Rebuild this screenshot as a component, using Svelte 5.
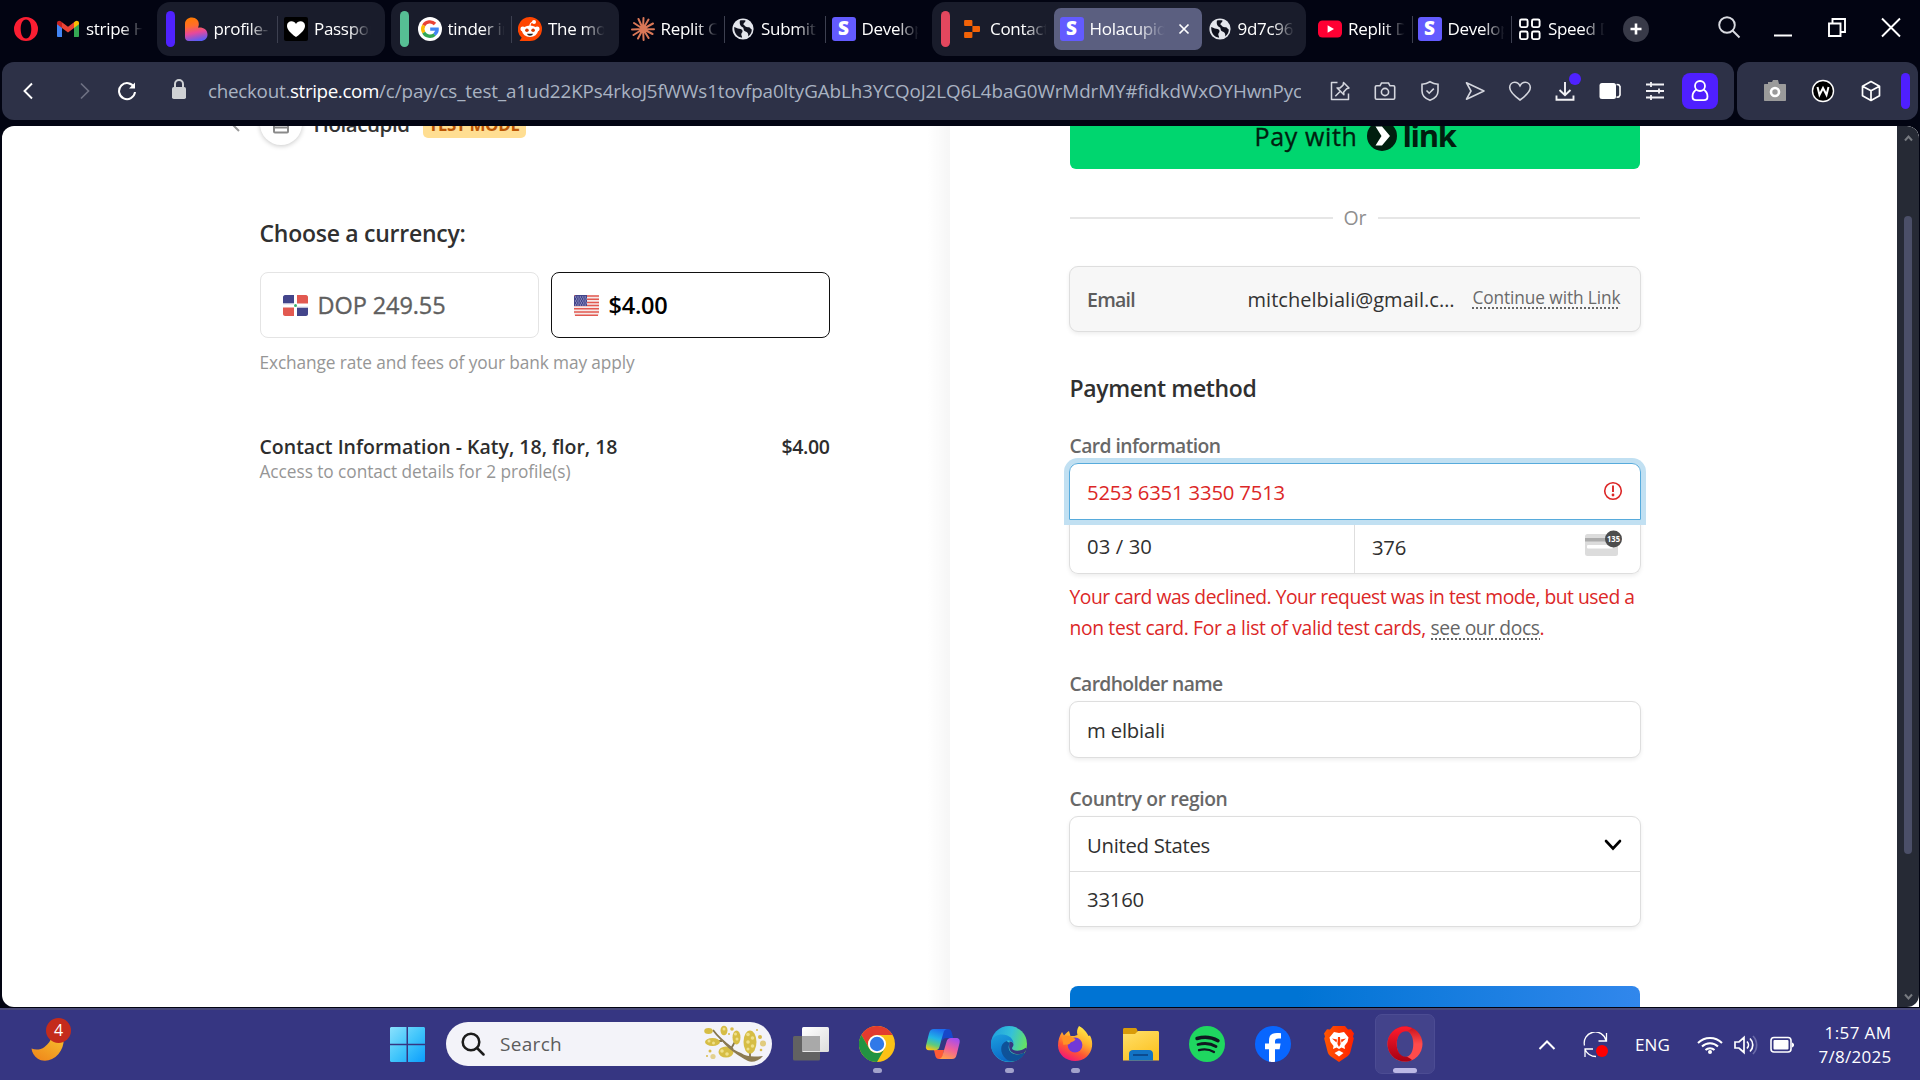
<script>
  const g1 = [
    { icon: 'tinder', text: 'profile-', sep: true },
    { icon: 'heartTile', text: 'Passpor' }
  ];
  const g2 = [
    { icon: 'google', text: 'tinder in', sep: true },
    { icon: 'reddit', text: 'The mos' }
  ];
  const loose = [
    { icon: 'claude', text: 'Replit C', sep: true },
    { icon: 'globe', text: 'Submit', sep: true },
    { icon: 'stripe', text: 'Develop' }
  ];
  const g3 = [
    { icon: 'replit', text: 'Contact' },
    { icon: 'stripe', text: 'Holacupid', active: true },
    { icon: 'globe', text: '9d7c96' }
  ];
  const tail = [
    { icon: 'youtube', text: 'Replit D', sep: true },
    { icon: 'stripe', text: 'Develop', sep: true },
    { icon: 'speed', text: 'Speed D' }
  ];
  const tools = ['pin', 'camera', 'shield', 'send', 'heart', 'download', 'cup', 'sliders'];
  const apps = [
    { icon: 'taskview' },
    { icon: 'chrome', run: true },
    { icon: 'copilot' },
    { icon: 'edge', run: true },
    { icon: 'firefox', run: true },
    { icon: 'folder' },
    { icon: 'spotify' },
    { icon: 'facebook' },
    { icon: 'brave' },
    { icon: 'opera', focus: true }
  ];

  // Tracks a line of text so that it spans the given width.
  function fit(node, width) {
    const natural = node.getBoundingClientRect().width;
    const count = node.textContent.length;
    node.style.letterSpacing = ((width - natural) / count).toFixed(3) + 'px';
  }
</script>

{#snippet icon(name)}
  {#if name === 'operaMark'}
    <svg width="26" height="26" viewBox="0 0 26 26"><path fill="#fa1e32" fill-rule="evenodd" d="M13 1a12 12 0 1 1 0 24a12 12 0 1 1 0-24zM13 3.6c-3.600 0-5.300 4.400-5.300 9.400s1.700 9.400 5.300 9.400s5.300-4.400 5.300-9.400s-1.700-9.400-5.300-9.400z" /></svg>
  {:else if name === 'gmail'}
    <svg width="24" height="24" viewBox="0 0 24 24"><path fill="#4285f4" d="M1 6v13.200c0 .5.400.8.800.8H6V10z" /><path fill="#34a853" d="M18 20h4.200c.5 0 .8-.4.800-.8V6l-5 4z" /><path fill="#fbbc04" d="M18 5.300V11l5-3.800V6c0-2-2.300-2.900-3.800-1.700z" /><path fill="#ea4335" d="M6 11V5.300l6 4.500 6-4.500V11l-6 4.600z" /><path fill="#c5221f" d="M1 6v1.200L6 11V5.300L4.800 4.300C3.300 3.100 1 4 1 6z" /></svg>
  {:else if name === 'tinder'}
    <svg width="24" height="24" viewBox="0 0 24 24"><defs><linearGradient id="td" x1=".3" y1="0" x2=".5" y2="1"><stop offset="0" stop-color="#ff7a00" /><stop offset=".35" stop-color="#ff6d2d" /><stop offset=".65" stop-color="#e8489a" /><stop offset="1" stop-color="#5b5cf5" /></linearGradient></defs><path fill="url(#td)" d="M1 7C1 3 4 .5 8 .5s7 3 6.800 6.500c0 1.500-.3 2.500-.8 3.700 5-.7 9.500 2 9.500 6.800 0 4-3 6.500-7 6.500H5c-3 0-4-2-4-4z" /></svg>
  {:else if name === 'heartTile'}
    <svg width="24" height="24" viewBox="0 0 24 24"><rect width="24" height="24" rx="2" /><path fill="#fff" d="M12 20C5.500 15.500 3 12 3 8.700 3 5.800 5 4.200 7.500 4.200c2 0 3.600 1 4.500 2.800.9-1.800 2.500-2.800 4.500-2.800C19 4.200 21 5.800 21 8.700c0 3.300-2.500 6.800-9 11.300z" /></svg>
  {:else if name === 'google'}
    <svg width="24" height="24" viewBox="0 0 24 24"><circle cx="12" cy="12" r="12" fill="#fff" /><g fill="none" stroke-width="3.400"><path stroke="#ea4335" d="M17 7A7.200 7.200 0 0 0 5.700 8.400" /><path stroke="#fbbc05" d="M5.800 8.300a7.200 7.200 0 0 0 0 7.400" /><path stroke="#34a853" d="M5.700 15.600a7.200 7.200 0 0 0 11 1.800" /><path stroke="#4285f4" d="M16.500 17.500c1.800-1.500 2.700-3.500 2.600-5.400H12.200" /></g></svg>
  {:else if name === 'reddit'}
    <svg width="24" height="24" viewBox="0 0 24 24"><path fill="#ff4500" d="M12 0a12 12 0 1 1 0 24H1.500l2.200-3.300A12 12 0 0 1 12 0z" /><circle cx="4.800" cy="12" r="2.400" fill="#fff" /><circle cx="19.200" cy="12" r="2.400" fill="#fff" /><circle cx="16" cy="5" r="2" fill="#fff" /><path d="M12 9c0-3 1.500-4 4-4" fill="none" stroke="#fff" stroke-width="1.200" /><ellipse cx="12" cy="14.200" rx="7.800" ry="5.800" fill="#fff" /><circle cx="8.900" cy="13.300" r="1.800" fill="#d93a00" /><circle cx="15.100" cy="13.300" r="1.800" fill="#d93a00" /><path d="M9 16.800h6c-.4 2.600-5.600 2.600-6 0z" fill="#222" /></svg>
  {:else if name === 'claude'}
    <svg width="24" height="24" viewBox="0 0 24 24"><path d="M12 12L12.500 1M12 12L17.500 2.500M12 12L22 6.500M12 12l11 .3M12 12l9.500 5M12 12l5.600 9M12 12l.6 11M12 12L7 21.500M12 12l-9.500 6M12 12L1 12.500M12 12L3 6M12 12L7.500 2" stroke="#d97757" stroke-width="2" stroke-linecap="round" /></svg>
  {:else if name === 'globe'}
    <svg width="24" height="24" viewBox="0 0 24 24"><circle cx="12" cy="12" r="10.600" fill="#e4e6ec" /><path fill="#10121e" d="M3.200 10c2 .5 3 1.600 5 1.800 2 .1 3.300.8 3.300 2.400 0 1.500-1.300 1.700-1.200 3.300 0 1.200.9 2 .8 3.200C6.300 20.200 3 16.500 3.200 10zM9 3.600c1.500-.5 4-.6 5.500-.1.200 1.500-1.500 2-2 3.300-.4 1 .8 1.300 1.500 2.200 1 1.300 2.600 1 4 1.300 1.700.4 1.500 2 2.800 2.300 0 3-1.400 5.400-3.600 6.800.3-2-.2-3.500-1.600-4.400-1.500-1-2.900-1-3-3 0-1.700-1.700-1.900-2.700-2.900C8.600 7.700 8.500 5 9 3.600z" /></svg>
  {:else if name === 'stripe'}
    <span class="stripe-logo">S</span>
  {:else if name === 'replit'}
    <svg width="24" height="24" viewBox="0 0 24 24"><g fill="#f26207"><path d="M5 3h6.500c.5 0 .9.400.9.900V9H5c-.5 0-.9-.4-.9-.9V3.900c0-.5.400-.9.900-.9zM12.400 9h6.700c.5 0 .9.400.9.900v4.200c0 .5-.4.900-.9.900h-6.700zM5 15h7.400v5.100c0 .5-.4.900-.9.900H5c-.5 0-.9-.4-.9-.9v-4.200c0-.5.400-.9.900-.9z" /></g></svg>
  {:else if name === 'youtube'}
    <svg width="24" height="24" viewBox="0 0 24 24"><rect y="3.500" width="24" height="17" rx="4.500" fill="#ff0033" /><path fill="#fff" d="M9.600 8.300l6.400 3.700-6.400 3.700z" /></svg>
  {:else if name === 'speed'}
    <svg width="24" height="24" viewBox="0 0 24 24" fill="none" stroke="#fff" stroke-width="1.900"><rect x="2" y="2.500" width="7.600" height="7.600" rx="1.500" /><rect x="14" y="2.500" width="7.600" height="7.600" rx="1.500" /><rect x="2" y="14.500" width="7.600" height="7.600" rx="1.500" /><rect x="14" y="14.500" width="7.600" height="7.600" rx="1.500" /></svg>
  {:else if name === 'pin'}
    <svg width="24" height="24" viewBox="0 0 24 24" fill="none" stroke="#d4d6de" stroke-width="1.500" stroke-linejoin="round"><path d="M9.500 3.500h-6v17h17V14.500" /><path d="M15.500 3.500l5.500 5.500-2.300.7-3 3.300.2 2.700-6.800-6.800 2.800.2 3.200-3zM12.300 12.300l-5 5" /></svg>
  {:else if name === 'camera'}
    <svg width="24" height="24" viewBox="0 0 24 24" fill="none" stroke="#d4d6de" stroke-width="1.600"><path d="M3.500 6.800H7L8.500 4h7L17 6.800h3.500c.7 0 1.200.5 1.200 1.200v11c0 .7-.5 1.200-1.200 1.200h-17c-.7 0-1.200-.5-1.200-1.200V8c0-.7.500-1.200 1.200-1.200z" /><circle cx="12" cy="13" r="3.600" /></svg>
  {:else if name === 'shield'}
    <svg width="24" height="24" viewBox="0 0 24 24" fill="none" stroke="#d4d6de" stroke-width="1.600"><path d="M12 2.700c2.500 1.500 5 2.300 8 2.600V12c0 4.500-3 7.500-8 9.300C7 19.500 4 16.500 4 12V5.300c3-.3 5.500-1.100 8-2.600z" /><path d="M8.500 11.500l2.700 2.700 4.600-4.600" /></svg>
  {:else if name === 'send'}
    <svg width="24" height="24" viewBox="0 0 24 24" fill="none" stroke="#d4d6de" stroke-width="1.600" stroke-linejoin="round"><path d="M3.500 3.800L21 12 3.500 20.200 8 12z" /></svg>
  {:else if name === 'heart'}
    <svg width="24" height="24" viewBox="0 0 24 24" fill="none" stroke="#d4d6de" stroke-width="1.600"><path d="M12 21C5 16 1.700 12.500 1.700 8.600c0-3.200 2.300-5.300 5-5.300 2.300 0 4.200 1.300 5.300 3.500 1.100-2.200 3-3.500 5.300-3.500 2.700 0 5 2.100 5 5.300C22.300 12.500 19 16 12 21z" /></svg>
  {:else if name === 'download'}
    <svg width="24" height="24" viewBox="0 0 24 24" fill="none" stroke="#f2f2f5" stroke-width="1.900"><path d="M12 3v13M6.500 11l5.500 5.300L17.500 11M3.500 16.500v4.300h17v-4.300" /></svg>
    <i class="dl-dot"></i>
  {:else if name === 'cup'}
    <svg width="24" height="24" viewBox="0 0 24 24"><rect x="1.500" y="4" width="16.500" height="16" rx="2.500" fill="#fff" /><path d="M18.500 5.500l2.300.3 1.200 1.800v8.500l-1.200 1.800-2.300.3" fill="none" stroke="#fff" stroke-width="1.600" /></svg>
  {:else if name === 'sliders'}
    <svg width="24" height="24" viewBox="0 0 24 24" stroke="#f2f2f5" stroke-width="1.800"><path d="M3 5.500h18M3 12h18M3 18.500h18M8 3v5M16 9.500v5M8 16v5" /></svg>
  {:else if name === 'taskview'}
    <svg width="36" height="36" viewBox="0 0 36 36"><defs><linearGradient id="tv" x2="1" y2="1"><stop stop-color="#fff" /><stop offset="1" stop-color="#dcdcdc" /></linearGradient></defs><rect y="10" width="27" height="24.500" rx="1.500" fill="#626262" /><rect x="9" y="1" width="27" height="25" rx="1.500" fill="url(#tv)" /><path fill="#a9a9a9" d="M9 10h18v15H9z" /></svg>
  {:else if name === 'chrome'}
    <svg width="36" height="36" viewBox="0 0 36 36"><circle cx="18" cy="18" r="18" fill="#fbc116" /><path fill="#e33b2e" d="M2.400 9A18 18 0 0 1 33.600 9H18a9 9 0 0 0-7.800 13.500z" /><path fill="#229342" d="M2.400 9a18 18 0 0 0 15.600 27l7.800-13.500a9 9 0 0 1-15.600 0z" /><circle cx="18" cy="18" r="9" fill="#fff" /><circle cx="18" cy="18" r="7.200" fill="#3079e8" /></svg>
  {:else if name === 'copilot'}
    <svg width="36" height="36" viewBox="0 0 36 36"><defs><linearGradient id="ca" x1=".6" x2=".3" y2="1"><stop stop-color="#1d6bf0" /><stop offset=".45" stop-color="#22b5e6" /><stop offset=".75" stop-color="#5ecb7c" /><stop offset="1" stop-color="#f5c518" /></linearGradient><linearGradient id="cb" x1=".7" x2=".3" y2="1"><stop stop-color="#a54df0" /><stop offset=".5" stop-color="#f0609a" /><stop offset="1" stop-color="#ff9f4a" /></linearGradient></defs><path fill="#1747c9" d="M17 3h6c2 0 3 1 3.600 3l1.600 6h-7c-2 0-3.200 1-4 3z" /><path fill="#ff5a36" d="M9 24h10l-2 9h-3c-2 0-3-1-3.600-3z" /><path fill="url(#ca)" d="M9 3h13c-2 .3-3 2-3.600 4l-4 14c-.6 2.200-2 3.300-4.400 3.300H4c-2.600 0-3.600-2-3-4.800l3-12C4.800 4.400 6.300 3 9 3z" /><path fill="url(#cb)" d="M27 33H14c2-.3 3-2 3.600-4l4-13.500c.6-2.200 2-3.500 4.400-3.500h5c3 0 4.300 2 3.600 4.800l-3 12C31 31.600 29.700 33 27 33z" /></svg>
  {:else if name === 'edge'}
    <svg width="36" height="36" viewBox="0 0 36 36"><defs><linearGradient id="ea" x2="1" y1=".3" y2=".6"><stop stop-color="#20a0e0" /><stop offset=".5" stop-color="#35c1d8" /><stop offset="1" stop-color="#6be556" /></linearGradient><linearGradient id="eb" x2=".4" y2="1"><stop stop-color="#1ca0de" /><stop offset="1" stop-color="#0a68c8" /></linearGradient></defs><circle cx="18" cy="18" r="18" fill="url(#ea)" /><path fill="url(#eb)" d="M0 16C1 11 6 8.500 11 8.500c7 0 11.500 4.500 11.500 9C21 15 18 14 15.500 15 12 17 12 23 15 27c3 4.500 9 6.500 14 5A18 18 0 0 1 0 16z" /><path fill="#0f5299" d="M15.500 15C8 18 9 28 15 33c6 4.500 14 2 18.500-5 .8-1-.3-1.500-1.300-1-6 3-13.700 1-14.500-5-.3-2.500 1-4.500 1-5z" /><path fill="#363682" d="M18.500 15.500c2.700.2 4 1.500 4 3.200 0 1.500-1.500 2.300-1.500 3.600 0 3 9 3.700 13.700-.5L36 23l-3 4c-6 2.500-13.500 1-14.700-5-.5-2.500.2-4.600.2-6.500z" /></svg>
  {:else if name === 'firefox'}
    <svg width="36" height="36" viewBox="0 0 36 36"><defs><linearGradient id="fa" x1=".8" x2=".3" y2="1"><stop stop-color="#fff04a" /><stop offset=".4" stop-color="#ffb02e" /><stop offset=".7" stop-color="#ff5634" /><stop offset="1" stop-color="#f0127d" /></linearGradient></defs><path fill="url(#fa)" d="M22 0c6 3.500 8 7 9.500 10l1.500-.5c2 4 2.500 7 2 11C34 29 27 35 18 35S1 28.500 1 19.500C1 14 2.500 10 5 6l2 3.500C9 7 10.500 6 12 5l1.500 5c3 0 5 0 7-1C19.500 6 20 3 22 0z" /><circle cx="18" cy="19" r="7.400" fill="#7139d8" /><path fill="#ff9226" d="M5 12c3-3 6-2 8.500-2 1.500 1.500 3 2 5 3-1 3-5 2.500-6 5-2 1-4 0-6 1z" /></svg>
  {:else if name === 'folder'}
    <svg width="36" height="36" viewBox="0 0 36 36"><defs><linearGradient id="fo" x2=".6" y2="1"><stop stop-color="#ffe06a" /><stop offset="1" stop-color="#fcc324" /></linearGradient></defs><path fill="#d99b09" d="M0 3.500C0 2.500.7 2 1.500 2H12c1 0 2 .5 2 1.500L16 9H0z" /><path fill="url(#fo)" d="M0 8h12l3-3h19.500c.9 0 1.500.6 1.500 1.500V34.500H0z" /><path fill="#1273c4" d="M6 34.500V28c0-2.500 1.500-4 4-4h16c2.500 0 4 1.500 4 4v6.500z" /><path stroke="#0b4b8f" stroke-width="2" d="M10 29h15" /></svg>
  {:else if name === 'spotify'}
    <svg width="36" height="36" viewBox="0 0 36 36"><circle cx="18" cy="18" r="18" fill="#1fd760" /><g fill="none" stroke="#101820" stroke-linecap="round"><path stroke-width="3.400" d="M8 12.500c7-2 15-1.200 21 2.200" /><path stroke-width="2.800" d="M9 18.500c6-1.600 13-1 18 2" /><path stroke-width="2.300" d="M10 24.200c5-1.300 10.500-.8 15 1.800" /></g></svg>
  {:else if name === 'facebook'}
    <svg width="36" height="36" viewBox="0 0 36 36"><circle cx="18" cy="18" r="18" fill="#0866ff" /><path fill="#fff" d="M14 35.500V23.300H10v-5.800h4v-2.600c0-5.500 2.500-8 8-8 1.500 0 3 .1 4 .4v5.200c-.7-.1-1.500-.1-2.500-.1-2.700 0-3.500 1-3.500 3.200v1.900h5.600l-1 5.800H20v12.400c-2 .4-4 .3-6-.2z" /></svg>
  {:else if name === 'brave'}
    <svg width="36" height="36" viewBox="0 0 36 36"><defs><linearGradient id="br" x2="1"><stop stop-color="#ff5601" /><stop offset="1" stop-color="#ff2000" /></linearGradient></defs><path fill="url(#br)" d="M12 0h12l3 3.500 3-.3 3 4.300-1 3 .8 2-3.300 13c-.5 2.500-1.500 3.500-3 4.700L18 36l-8.500-5.800C8 29 7 28 6.500 25.500l-3.300-13 .8-2-1-3 3-4.300 3 .3z" /><path fill="#fff" d="M18 7l5-1 4.500 5.500-1 4.500-3 4 .5 3-3.500-1.500-2.500 1.500-2.500-1.500L12 23l.5-3-3-4-1-4.500L13 6zM18 24.500l4.500 2.500-4.500 3.500-4.500-3.500z" /><path fill="#ff3a00" d="M11 12.500l5 1-.5 3zM25 12.500l-5 1 .5 3zM17 11h2l.6 7L18 21l-1.600-3z" /></svg>
  {:else if name === 'opera'}
    <svg width="36" height="36" viewBox="0 0 36 36"><defs><linearGradient id="oa" y2="1" x2="0"><stop stop-color="#ff1b2d" /><stop offset="1" stop-color="#a70014" /></linearGradient><linearGradient id="ob" y2="1" x2="0"><stop stop-color="#c8101c" /><stop offset=".5" stop-color="#ff4b4b" /><stop offset="1" stop-color="#ff4b4b" /></linearGradient></defs><path fill="url(#ob)" fill-rule="evenodd" d="M18 .5a17.500 17.500 0 1 1 0 35a17.500 17.500 0 1 1 0-35zM18 5c-5.500 0-8.300 6-8.300 13S12.500 31 18 31s8.300-6 8.300-13S23.500 5 18 5z" /><path fill="url(#oa)" d="M18 .5C8 .5.500 8.500.500 18S8 35.500 18 35.500c2.500 0 5-.6 7-1.600-1.500-1.200-3-2.300-5-3.100-6.500.8-10.300-5.500-10.300-12.800S13.500 4.500 20 5.200c2-.8 3.500-1.900 5-3.100C23 1.100 20.500.5 18 .5z" /></svg>
  {/if}
{/snippet}

{#snippet tab(t)}
  <div class="tab" class:active={t.active} class:sep={t.sep}>
    <span class="ico">{@render icon(t.icon)}</span>
    <span class="label">{t.text}</span>
    {#if t.active}
      <svg class="close" width="14" height="14" viewBox="0 0 14 14"><path d="M2.500 2.500l9 9M11.500 2.500l-9 9" stroke="#fff" stroke-width="1.700" /></svg>
    {/if}
  </div>
{/snippet}

<div class="screen">
  <header class="tabs">
    <span class="brand">{@render icon('operaMark')}</span>
    <div class="tab first"><span class="ico">{@render icon('gmail')}</span><span class="label">stripe H</span></div>
    <div class="group"><i class="bar violet"></i>{#each g1 as t}{@render tab(t)}{/each}</div>
    <div class="group second"><i class="bar green"></i>{#each g2 as t}{@render tab(t)}{/each}</div>
    <div class="loose">{#each loose as t}{@render tab(t)}{/each}</div>
    <div class="group third"><i class="bar red"></i>{#each g3 as t}{@render tab(t)}{/each}</div>
    <div class="loose tail">{#each tail as t}{@render tab(t)}{/each}</div>
    <span class="plus"><svg width="26" height="26" viewBox="0 0 26 26"><path d="M13 7.500v11M7.500 13h11" stroke="#fff" stroke-width="2.600" /></svg></span>
    <div class="win">
      <svg width="24" height="24" viewBox="0 0 24 24" fill="none" stroke="#d8dae0" stroke-width="1.900"><circle cx="10" cy="10" r="7.800" /><path d="M15.500 15.500l7 7" /></svg>
      <svg width="20" height="24" viewBox="0 0 20 24"><path d="M1 20.500h18" stroke="#fff" stroke-width="2" /></svg>
      <svg width="20" height="24" viewBox="0 0 20 24" fill="none" stroke="#fff" stroke-width="1.900"><path d="M2 8.500h11.500V21H2zM5.500 8V4H18v13h-4" /></svg>
      <svg width="20" height="24" viewBox="0 0 20 24" fill="none" stroke="#fff" stroke-width="1.900"><path d="M1 3.500l18 18M19 3.500l-18 18" /></svg>
    </div>
  </header>

  <div class="navrow">
    <div class="address">
      <svg class="back" width="12" height="18" viewBox="0 0 12 18" fill="none" stroke="#fff" stroke-width="1.900"><path d="M10 1.500L2.500 9l7.500 7.500" /></svg>
      <svg class="fwd" width="12" height="18" viewBox="0 0 12 18" fill="none" stroke="#6d7082" stroke-width="1.700"><path d="M2 1.500L9.500 9 2 16.500" /></svg>
      <svg class="reload" width="20" height="20" viewBox="0 0 20 20" fill="none" stroke="#fff" stroke-width="2"><path d="M17.200 6.500A8 8 0 1 0 18 11" /><path d="M18 1.500v6h-6z" fill="#fff" stroke="none" /></svg>
      <svg class="lock" width="16" height="22" viewBox="0 0 16 22"><rect x="1" y="9" width="14" height="12" rx="1.800" fill="#cfd1d4" /><path d="M4 10V6a4 4 0 0 1 8 0v4" fill="none" stroke="#cfd1d4" stroke-width="2" /></svg>
      <div class="url"><span use:fit={82}>checkout.</span><span class="host" use:fit={89}>stripe.com</span><span use:fit={923}>/c/pay/cs_test_a1ud22KPs4rkoJ5fWWs1tovfpa0ltyGAbLh3YCQoJ2LQ6L4baG0WrMdrMY#fidkdWxOYHwnPyc</span></div>
      <div class="tools">{#each tools as t}<span class="tool">{@render icon(t)}</span>{/each}</div>
      <span class="profile"><svg width="20" height="26" viewBox="0 0 20 26" fill="none" stroke="#fff" stroke-width="1.800"><circle cx="10" cy="8" r="5" /><path d="M6.500 11.500C4 13 2.500 15.500 2.500 18.500c0 2.500 1.200 3.700 3.500 3.700h8c2.300 0 3.500-1.200 3.500-3.700 0-3-1.500-5.500-4-7" /></svg></span>
    </div>
    <div class="ext">
      <svg width="24" height="24" viewBox="0 0 24 24"><path fill="#9b9b9b" d="M2 5h3V3h4l1-2h5l1 4h6c.6 0 1 .4 1 1v15c0 .6-.4 1-1 1H2c-.6 0-1-.4-1-1V6c0-.6.400-1 1-1z" /><circle cx="12" cy="13" r="4" fill="none" stroke="#fff" stroke-width="2.600" /></svg>
      <svg width="24" height="24" viewBox="0 0 24 24"><circle cx="12" cy="12" r="11.200" fill="#fff" /><circle cx="12" cy="12" r="9.800" fill="#000" /><path d="M6.500 8l2 8 3.500-7 3.500 7 2-8" fill="none" stroke="#fff" stroke-width="2" /></svg>
      <svg width="24" height="24" viewBox="0 0 24 24" fill="none" stroke="#fff" stroke-width="1.700" stroke-linejoin="round"><path d="M12 2.500l8.500 4.700v9.600L12 21.500l-8.500-4.700V7.200zM3.500 7.200l8.500 4.600 8.500-4.600M12 11.800v9.700" /></svg>
      <i class="extbar"></i>
    </div>
  </div>

  <div class="viewport">
    <section class="left">
      <div class="merchant">
        <svg class="arrow" width="12" height="18" viewBox="0 0 12 18" fill="none" stroke="#999" stroke-width="2"><path d="M10 1L2 9l8 8" /></svg>
        <span class="store"><svg width="18" height="20" viewBox="0 0 18 20" fill="none" stroke="#8a8a8a" stroke-width="2"><path d="M2 3h14v14.500c0 .6-.4 1-1 1H3c-.6 0-1-.4-1-1zM2 9h14M2 13.500h14" /></svg></span>
        <span class="mname"><span use:fit={96}>Holacupid</span></span>
        <span class="badge"><span use:fit={91}>TEST MODE</span></span>
      </div>
      <h2><span use:fit={206}>Choose a currency:</span></h2>
      <div class="currencies">
        <div class="cur">
          <svg width="25" height="21" viewBox="0 0 25 21"><path fill="#43458b" d="M2 0h9v8.500H0V2c0-1 1-2 2-2zM14 12.500h11V19c0 1-1 2-2 2h-9z" /><path fill="#e25950" d="M14 0h9c1 0 2 1 2 2v6.500H14zM0 12.500h11V21H2c-1 0-2-1-2-2z" /><path fill="#dcdcea" d="M0 8.500h11v1H0zM14 11.500h11v1H14z" /><circle cx="12.500" cy="10.500" r="1.500" fill="#3cb371" /></svg>
          <span class="medium" use:fit={128}>DOP 249.55</span>
        </div>
        <div class="cur on">
          <svg width="25" height="21" viewBox="0 0 25 21"><rect width="25" height="21" rx="2" fill="#f6e9e8" /><path stroke="#e25950" stroke-width="1.500" d="M0 1h25M0 4.200h25M0 7.400h25M0 10.600h25M0 13.800h25M0 17h25M1 20.200h23" /><path fill="#43458b" d="M2 0h11v11H0V2c0-1 1-2 2-2z" /><path stroke="#b9bade" stroke-width="1" stroke-dasharray="1.200 1.200" d="M1 2h11M2 4h11M1 6h11M2 8h11M1 10h11" /></svg>
          <span use:fit={59}>$4.00</span>
        </div>
      </div>
      <p class="rate"><span use:fit={375}>Exchange rate and fees of your bank may apply</span></p>
      <div class="item"><span use:fit={358}>Contact Information - Katy, 18, flor, 18</span><span use:fit={48}>$4.00</span></div>
      <p class="desc"><span use:fit={311}>Access to contact details for 2 profile(s)</span></p>
    </section>

    <section class="right">
      <div class="paylink"><span class="medium" use:fit={103}>Pay with</span>
        <svg width="30" height="30" viewBox="0 0 30 30"><circle cx="15" cy="15" r="15" fill="#011e0f" /><path fill="#fff" d="M8.500 5.500H15L23 15l-8 9.500H8.500L14.500 15z" /></svg>
        <span class="link" use:fit={53}>link</span>
      </div>
      <div class="or"><i></i><span use:fit={23}>Or</span><i></i></div>
      <div class="email"><span class="lab"><span use:fit={48}>Email</span></span><span class="addr" use:fit={207}>mitchelbiali@gmail.c…</span><span class="cont dotted" use:fit={148}>Continue with Link</span></div>
      <h2 class="pm"><span use:fit={187}>Payment method</span></h2>
      <span class="flabel"><span use:fit={151}>Card information</span></span>
      <div class="card">
        <div class="number"><span use:fit={198}>5253 6351 3350 7513</span>
          <svg width="20" height="20" viewBox="0 0 20 20"><circle cx="10" cy="10" r="8.300" fill="none" stroke="#dc2727" stroke-width="1.600" /><path d="M10 4.500v6.500" stroke="#dc2727" stroke-width="1.900" /><circle cx="10" cy="14" r="1.400" fill="#dc2727" /></svg>
        </div>
        <div class="pair">
          <div class="exp"><span use:fit={65}>03 / 30</span></div>
          <div class="cvc"><span use:fit={34}>376</span>
            <svg width="38" height="26" viewBox="0 0 38 26"><rect y="4" width="33" height="22" rx="2.500" fill="#dcdcdc" /><path fill="#acacac" d="M0 8h33v3.500H0z" /><rect x="2" y="15" width="26" height="3.500" rx="1" fill="#fff" /><circle cx="28.500" cy="9" r="8.500" fill="#4d4d4d" /><text x="28.500" y="12.300" text-anchor="middle" textLength="13" lengthAdjust="spacingAndGlyphs" font-size="9" font-weight="700" fill="#fff">135</text></svg>
          </div>
        </div>
      </div>
      <p class="error"><span use:fit={565}>Your card was declined. Your request was in test mode, but used a</span><br /><span use:fit={361}>non test card. For a list of valid test cards,&nbsp;</span><span class="dotted docs" use:fit={109}>see our docs</span>.</p>
      <span class="flabel name"><span use:fit={153}>Cardholder name</span></span>
      <div class="input"><span use:fit={78}>m elbiali</span></div>
      <span class="flabel name"><span use:fit={158}>Country or region</span></span>
      <div class="country">
        <div class="sel"><span use:fit={123}>United States</span><svg width="18" height="12" viewBox="0 0 18 12"><path d="M2 2l7 7.500L16 2" fill="none" stroke="#000" stroke-width="2.600" stroke-linecap="round" /></svg></div>
        <div class="zip"><span use:fit={57}>33160</span></div>
      </div>
      <div class="paybtn"></div>
    </section>

    <aside class="scroll">
      <svg width="9" height="8" viewBox="0 0 9 8"><path d="M1 6.500L4.500 2.500 8 6.500" fill="none" stroke="#777a80" stroke-width="2" /></svg>
      <i class="thumb"></i>
      <svg class="down" width="9" height="8" viewBox="0 0 9 8"><path d="M1 1.500L4.500 5.500 8 1.500" fill="none" stroke="#777a80" stroke-width="2" /></svg>
    </aside>
  </div>

  <footer class="taskbar">
    <div class="weather">
      <svg width="34" height="26" viewBox="0 0 34 26"><defs><linearGradient id="mo" x1="1" x2=".3" y2="1"><stop stop-color="#f6c12f" /><stop offset="1" stop-color="#f08a1c" /></linearGradient></defs><path fill="url(#mo)" d="M.5 12.500c4 1.800 9 1.500 13-1.500C17.500 8 20 4 21 0h11.500c.8 6-.5 13-5 18-6 7-15 8.500-21 4.500C3 20 1 16.500.5 12.500z" /></svg>
      <b>4</b>
    </div>
    <svg class="start" width="35" height="35" viewBox="0 0 35 35"><defs><linearGradient id="wi" x2="1" y2="1"><stop stop-color="#8be1fd" /><stop offset=".5" stop-color="#42c6fb" /><stop offset="1" stop-color="#0b9dfc" /></linearGradient></defs><path fill="url(#wi)" d="M1.500 0h15v16.700H0V1.500C0 .6.600 0 1.500 0zM18 0h15.500c.9 0 1.500.6 1.500 1.500v15.200H18zM0 18.200h16.500V35h-15C.6 35 0 34.400 0 33.500zM18 18.200h17v15.300c0 .9-.6 1.500-1.500 1.500H18z" /></svg>
    <div class="search">
      <svg width="24" height="24" viewBox="0 0 24 24" fill="none" stroke="#1c1c1c" stroke-width="2.500"><circle cx="10" cy="10" r="8.300" /><path d="M16 16l6.500 6.500" stroke-linecap="round" /></svg>
      <span use:fit={62}>Search</span>
      <svg class="branch" width="62" height="38" viewBox="0 0 62 38"><path fill="none" stroke="#85754f" stroke-width="1.800" d="M9 5c5 7 12 13 20 19M46 33V20M28 22l5-9M18 16h-8" /><g fill="#d6bd45"><ellipse cx="4.500" cy="6" rx="4.300" ry="3" /><ellipse cx="20" cy="5.500" rx="3.500" ry="4.800" /><ellipse cx="8.500" cy="17" rx="7.500" ry="4" /><ellipse cx="32.500" cy="12.500" rx="4" ry="7" /><ellipse cx="46" cy="17" rx="6.500" ry="11.500" /><ellipse cx="22" cy="27" rx="7.500" ry="5.500" /></g><path fill="#8b7a52" d="M14 11c8 8 15 14 23 17 6 4 12 4 22 3-4 5-11 7-15 5C36 32 22 23 14 11z" /><g fill="#efe08a"><circle cx="5" cy="16" r="1.500" /><circle cx="9.500" cy="18" r="1.500" /><circle cx="20" cy="4" r="1.500" /><circle cx="31.500" cy="9" r="1.500" /><circle cx="33" cy="14" r="1.500" /><circle cx="44" cy="9.500" r="1.800" /><circle cx="48.500" cy="13" r="1.800" /><circle cx="44" cy="17" r="1.800" /><circle cx="48.500" cy="21" r="1.800" /><circle cx="44" cy="24" r="1.500" /><circle cx="18" cy="26" r="1.800" /><circle cx="23" cy="29" r="1.800" /></g><g fill="#d8ba4a"><circle cx="28" cy="4" r="1.800" /><circle cx="25" cy="9" r="1" /><circle cx="53" cy="5" r="1" /><circle cx="56" cy="12" r="2" /><circle cx="59" cy="18.500" r="3" opacity=".7" /><circle cx="6" cy="26" r="1.500" /><circle cx="9" cy="31.500" r="2.600" opacity=".6" /><circle cx="3" cy="31" r="1" /><circle cx="57" cy="25" r="1.300" /></g></svg>
    </div>
    <div class="apps">
      {#each apps as a}
        <div class="app" class:focus={a.focus} class:run={a.run}>{@render icon(a.icon)}</div>
      {/each}
    </div>
    <div class="tray">
      <svg class="up" width="18" height="12" viewBox="0 0 18 12"><path d="M1.500 10L9 2.500l7.500 7.500" fill="none" stroke="#fff" stroke-width="2" /></svg>
      <svg class="sync" width="26" height="26" viewBox="0 0 26 26" fill="none" stroke="#fff" stroke-width="1.300"><path d="M1.500 13.500A11 11 0 0 1 23 8.500M23.500 1v8h-8M2 25v-8h8M2 17.500c2 4 6 7 11 7" /><circle cx="19" cy="19" r="6" fill="#ff0000" stroke="none" /></svg>
      <span class="lang" use:fit={35}>ENG</span>
      <svg class="wifi" width="26" height="20" viewBox="0 0 26 20" fill="none" stroke="#fff" stroke-width="2"><path d="M1 8a17 17 0 0 1 24 0M5 11.500a11.500 11.500 0 0 1 16 0M8.500 15a6.500 6.500 0 0 1 9 0" /><circle cx="13" cy="17" r="2" fill="#fff" stroke="none" /></svg>
      <svg class="vol" width="26" height="20" viewBox="0 0 26 20" fill="none" stroke="#fff" stroke-width="1.700"><path d="M1 7v6h4l5 4.500v-15L5 7zM13 6.500a5 5 0 0 1 0 7M16 3.500a9 9 0 0 1 0 13" /><path d="M19 1a13 13 0 0 1 0 18" stroke="#6b6ba8" /></svg>
      <svg class="bat" width="26" height="18" viewBox="0 0 26 18"><rect x="1" y="1.500" width="20" height="14.500" rx="3" fill="none" stroke="#fff" stroke-width="1.600" /><rect x="3.500" y="4" width="15" height="9.500" rx="1" fill="#fff" /><path d="M22.500 7v4c.8-.3 1-1 1-2s-.2-1.700-1-2z" fill="#fff" stroke="#fff" /></svg>
      <div class="clock"><span use:fit={67}>1:57 AM</span><span use:fit={73}>7/8/2025</span></div>
    </div>
  </footer>
</div>

<style>
  :global(body) { background: #020412; overflow: hidden; }
  .screen { width: 1920px; height: 1080px; display: flex; flex-direction: column; overflow: hidden; background: #020412; color: #333; font-family: 'Open Sans', 'Noto Sans', sans-serif; white-space: nowrap; }
  .screen :global(*) { box-sizing: border-box; }
  svg { display: block; flex: none; }
  .url span, .error span { display: inline-block; }
  p, h2 { margin: 0; }
  .medium { -webkit-text-stroke: 0.35px currentColor; }

  .tabs { height: 62px; flex: none; display: flex; align-items: flex-start; padding: 2px 0 0 13px; color: #fff; }
  .brand { width: 43px; padding-top: 14px; }
  .tab { width: 100.5px; height: 42px; display: flex; align-items: center; position: relative; margin-top: 6px; flex: none; }
  .tab.sep::after { content: ''; position: absolute; right: 6px; top: 8px; width: 1px; height: 27px; background: #3d4050; }
  .ico { width: 24px; height: 24px; flex: none; }
  .label { width: 59px; margin-left: 6px; font-size: 17px; line-height: 26px; letter-spacing: -0.3px; overflow: hidden; -webkit-mask-image: linear-gradient(90deg, #000 60%, transparent 96%); mask-image: linear-gradient(90deg, #000 60%, transparent 96%); }
  .tab.active { width: 148px; background: #5b5f80; border-radius: 7px; padding-left: 6px; margin-left: -7px; margin-right: 7px; }
  .tab.active .label { width: 78px; }
  .close { margin-left: 9px; }
  .group { height: 54px; background: #191c2b; border-radius: 13px; display: flex; width: 228px; padding-left: 9px; flex: none; }
  .second { margin: 0 12px 0 6px; }
  .third { width: 374px; margin-right: 12px; }
  .third .tab:last-child { margin-left: -1px; }
  .bar { width: 9px; height: 36px; border-radius: 5px; margin: 9px 9px 0 0; flex: none; }
  .violet { background: #4f22ff; }
  .green { background: #56be94; }
  .red { background: #e3475e; margin-right: 10px; }
  .loose { display: flex; }
  .tail .tab + .tab { left: -1px; }
  .stripe-logo { display: block; width: 24px; height: 24px; border-radius: 3px; background: #635bff; color: #fff; font-size: 19px; line-height: 23px; font-weight: 800; text-align: center; }
  .plus { width: 26px; height: 26px; border-radius: 50%; background: #383a48; margin: 14px 0 0 3px; flex: none; }
  .win { display: flex; margin: 13px 0 0 68px; }
  .win svg:nth-child(2) { margin-left: 32px; }
  .win svg:nth-child(3) { margin-left: 34px; }
  .win svg:nth-child(4) { margin-left: 34px; }

  .navrow { height: 58px; flex: none; display: flex; gap: 3px; padding-left: 2px; }
  .address { width: 1732px; background: #2d3147; border-radius: 12px; display: flex; align-items: center; padding-left: 19.500px; }
  .fwd { margin-left: 45.500px; }
  .reload { margin-left: 26px; }
  .lock { margin: -4px 0 0 34px; }
  .url { margin-left: 21px; width: 1093px; font-size: 18.800px; line-height: 28px; color: #a9b3c2; overflow: hidden; }
  .url .host { color: #fff; }
  .tools { display: flex; margin-left: 18px; }
  .tool { width: 45px; padding-left: 9px; position: relative; }
  .dl-dot { position: absolute; width: 12px; height: 12px; border-radius: 50%; background: #4f22ff; left: 25px; top: -6px; }
  .profile { width: 36px; height: 36px; border-radius: 8px; background: #4f1fff; display: grid; place-items: center; margin-left: 3px; }
  .ext { width: 181px; background: #2d3147; border-radius: 12px; display: flex; align-items: center; padding-left: 26px; }
  .ext svg + svg { margin-left: 24px; }
  .extbar { width: 9px; height: 36px; border-radius: 5px; background: #4f1fff; margin-left: 18px; }

  .viewport { height: 881px; margin: 6px 1px 0 2px; flex: none; display: flex; background: #fff; border-radius: 12px 12px 0 12px; overflow: hidden; }
  .left { width: 948px; padding-left: 257.500px; background: linear-gradient(90deg, rgba(0, 0, 0, 0) 925px, rgba(0, 0, 0, 0.035) 948px); }
  .merchant { display: flex; align-items: center; height: 42px; margin-top: -23px; margin-left: -31px; }
  .arrow { margin-top: -2px; }
  .store { width: 42px; height: 42px; border-radius: 50%; margin-left: 19px; background: #fff; box-shadow: 0 1px 5px rgba(0, 0, 0, 0.22); display: grid; place-items: center; }
  .mname { width: 96px; margin-left: 12px; font-size: 20.500px; font-weight: 600; }
  .badge { width: 103px; height: 27px; line-height: 27px; border-radius: 5px; background: #ffde92; color: #bb5504; font-size: 17px; font-weight: 700; margin-left: 13px; padding-left: 6px; }
  h2 { font-size: 23px; line-height: 30px; font-weight: 600; margin-top: 73px; color: #303030; }
  .currencies { display: flex; gap: 12px; margin-top: 24px; }
  .cur { width: 279px; height: 66px; border: 1px solid #e4e4e4; border-radius: 8px; display: flex; align-items: center; gap: 10px; padding-left: 22px; font-size: 23.500px; font-weight: 400; color: #5f5f5f; }
  .cur.on { border-color: #111; color: #000; font-weight: 600; }
  .rate, .desc { font-size: 17.300px; line-height: 24px; color: #969696; }
  .rate { margin-top: 13px; }
  .item { display: flex; justify-content: space-between; width: 570px; margin-top: 59px; height: 26px; line-height: 26px; font-size: 19.500px; font-weight: 600; color: #2d2d2d; }

  .right { width: 947px; padding-left: 119px; }
  .paylink { width: 570px; height: 66px; margin: -23px 0 0 1px; background: #00d66f; border-radius: 6px; display: flex; align-items: center; justify-content: center; color: #011e0f; font-size: 25px; }
  .paylink svg { margin-left: 9px; }
  .link { font-size: 31px; font-weight: 700; margin: -2px 0 0 6px; line-height: 40px; }
  .or { display: flex; align-items: center; width: 570px; height: 28px; margin: 35px 0 0 1px; gap: 11px; font-size: 19.500px; color: #8f8f8f; }
  .or i { flex: 1; height: 2px; background: #e6e6e6; }
  .or span { line-height: 28px; }
  .email { width: 572px; height: 66px; margin-top: 33.500px; border: 1px solid #dedede; border-radius: 9px; background: #f7f7f7; box-shadow: 0 2px 4px rgba(0, 0, 0, 0.07); display: flex; align-items: center; padding: 1px 17px 0; font-size: 20px; }
  .lab { width: 160.500px; font-weight: 600; font-size: 19.500px; color: #5c5c5c; }
  .cont { font-size: 17.300px; line-height: 23px; color: #6a6a6a; margin: -3px 0 0 18px; }
  .dotted { background: repeating-linear-gradient(90deg, #666 0 2px, transparent 2px 4px) 0 100% / 100% 2px no-repeat; }
  .pm { margin: 41.500px 0 0 0.5px; }
  .flabel { display: block; height: 26px; line-height: 26px; margin: 29.500px 0 4.500px 0.5px; font-size: 19.300px; font-weight: 600; color: #686868; }
  .card, .input, .country { width: 572px; border-radius: 9px; box-shadow: 0 2px 4px rgba(0, 0, 0, 0.07); font-size: 20.300px; color: #303030; background: #fff; }
  .number { height: 57px; position: relative; border: 1px solid #57abdc; border-radius: 9px 9px 0 0; box-shadow: 0 0 0 5px #c1e0f2; display: flex; align-items: center; justify-content: space-between; padding: 1px 17px 0; color: #dc2727; }
  .number svg { margin-top: -2px; }
  .pair { display: flex; height: 54px; border: 1px solid #dedede; border-top: 0; border-radius: 0 0 9px 9px; }
  .exp { width: 285px; border-right: 1px solid #dedede; padding-left: 17px; line-height: 53px; }
  .cvc { flex: 1; display: flex; align-items: center; justify-content: space-between; padding: 0 17px 0 17px; }
  .cvc svg { margin-top: -7px; }
  .error { margin: 7px 0 0 0.5px; line-height: 31px; font-size: 19.300px; color: #dc2727; }
  .error .docs { color: #666; line-height: 24px; }
  .name { margin-top: 27.500px; }
  .input { height: 57px; border: 1px solid #dedede; line-height: 55px; padding: 1px 0 0 17px; }
  .country { height: 111px; border: 1px solid #dedede; }
  .sel { height: 55px; border-bottom: 1px solid #dedede; display: flex; align-items: center; justify-content: space-between; padding: 2px 18px 0 17px; }
  .zip { height: 54px; line-height: 54px; padding: 0 0 0 17px; }
  .paybtn { width: 570px; height: 60px; margin: 58.500px 0 0 1px; border-radius: 8px; background: linear-gradient(90deg, #0074d4 40%, #3187ec); }

  .scroll { width: 22px; background: #262a35; border-radius: 0 12px 12px 0; display: flex; flex-direction: column; align-items: center; padding-top: 8px; }
  .thumb { width: 8px; height: 638px; border-radius: 4px; background: #4b4f68; margin-top: 74px; }
  .down { margin-top: 139px; }

  .taskbar { height: 72px; margin-top: 1px; border-top: 2px solid #484878; background: #363682; display: flex; position: relative; align-items: flex-start; }
  .weather { width: 390px; height: 70px; padding: 26px 0 0 31px; position: relative; flex: none; }
  .weather b { position: absolute; left: 46px; top: 8px; width: 25px; height: 25px; border-radius: 50%; background: #c42b1c; color: #fff; font-size: 16px; font-weight: 400; line-height: 24px; text-align: center; }
  .start { margin-top: 17px; }
  .search { width: 326px; height: 44px; border-radius: 22px; background: #f3f3f9; margin: 12px 0 0 21px; display: flex; align-items: center; padding-left: 15px; font-size: 19px; color: #5c5c5c; flex: none; }
  .search span { margin-left: 15px; }
  .branch { margin-left: 142px; }
  .apps { display: flex; margin: 4px 0 0 2.500px; gap: 6px; flex: none; padding-left: 6px; }
  .app { width: 60px; height: 60px; border-radius: 7px; display: grid; place-items: center; position: relative; }
  .app.focus { background: #43438b; border: 1px solid #4c4c93; }
  .app.run::after, .app.focus::after { content: ''; position: absolute; left: 26px; bottom: 1px; width: 9px; height: 5px; border-radius: 3px; background: #a2a2cc; }
  .app.focus::after { left: 17px; bottom: 0; width: 24px; background: #bcb8e6; }
  .tray { display: flex; align-items: center; height: 69px; margin-left: 103.500px; color: #fff; flex: none; }
  .sync { margin-left: 27px; }
  .lang { margin-left: 26px; font-size: 17px; }
  .wifi { margin-left: 26.500px; }
  .vol { margin-left: 11px; }
  .bat { margin-left: 10px; }
  .clock { width: 96px; display: flex; flex-direction: column; align-items: flex-end; font-size: 17px; line-height: 24px; }
</style>
